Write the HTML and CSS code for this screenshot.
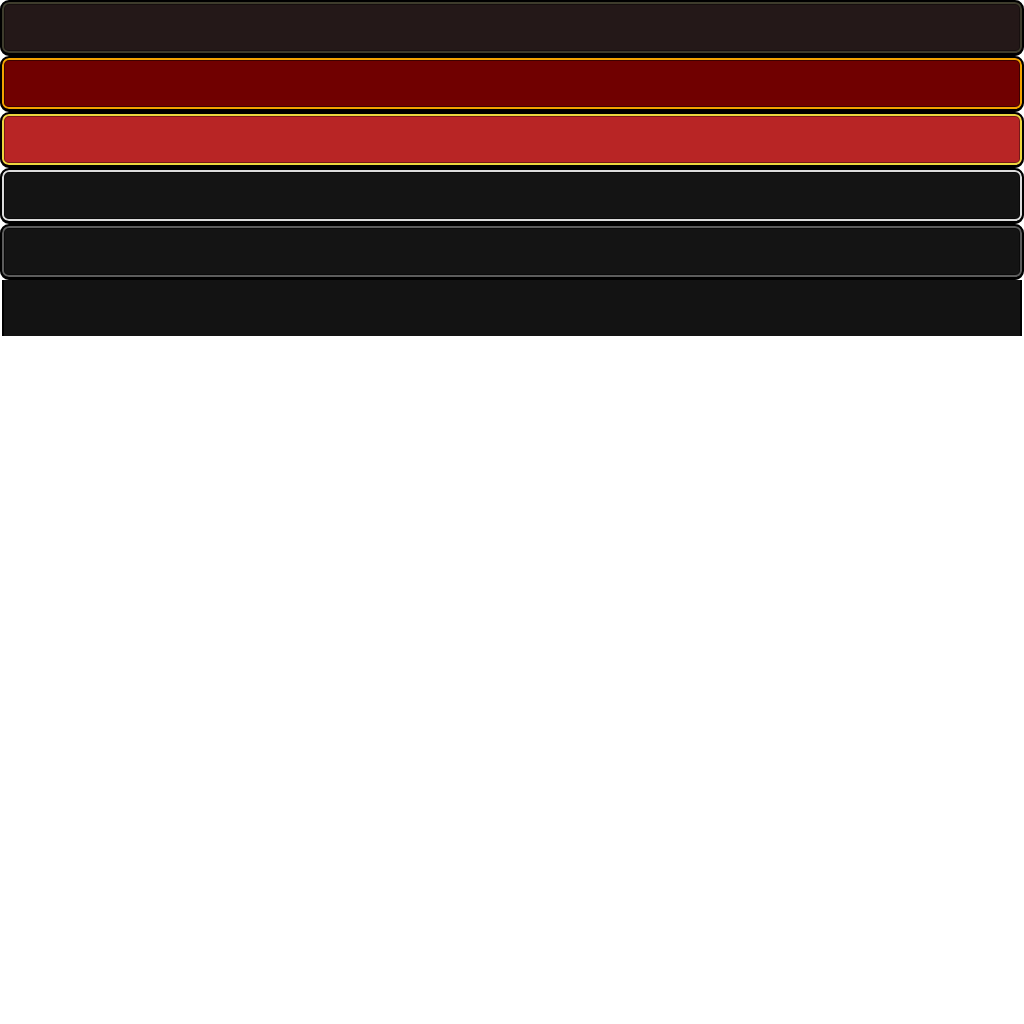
FILE: index.html
```html
<!DOCTYPE html>
<html>
<head>
<meta charset="utf-8">
<link rel="stylesheet" href="styles.css">
</head>
<body>
<div class="stack">
  <div class="bar bar-brown"></div>
  <div class="bar bar-maroon"></div>
  <div class="bar bar-red"></div>
  <div class="bar bar-black-light"></div>
  <div class="bar bar-black-gray"></div>
  <div class="panel"></div>
</div>
</body>
</html>
```

FILE: styles.css
```css
html, body {
  margin: 0;
  padding: 0;
  background: #ffffff;
}

.stack {
  display: flex;
  flex-direction: column;
  width: 1024px;
}

.bar {
  box-sizing: border-box;
  height: 56px;
  border: 2px solid #000;
  border-bottom-width: 3px;
  border-radius: 9px;
}

.bar-brown {
  background: #241818;
  box-shadow: inset 0 0 0 2px #3e3c2c, inset 0 0 0 3px rgba(0,0,0,0.35);
}

.bar-maroon {
  background: #700000;
  box-shadow: inset 0 0 0 2px #f2a200, inset 0 0 0 3px rgba(0,0,0,0.45);
}

.bar-red {
  background: #b82525;
  box-shadow: inset 0 0 0 2px #ecd63e, inset 0 0 0 3px rgba(0,0,0,0.35);
}

.bar-black-light {
  background: #141414;
  box-shadow: inset 0 0 0 2px #dcdcdc, inset 0 0 0 3px rgba(0,0,0,0.5);
}

.bar-black-gray {
  background: #141414;
  box-shadow: inset 0 0 0 2px #5c5c5c, inset 0 0 0 3px rgba(0,0,0,0.5);
}

.panel {
  box-sizing: border-box;
  height: 56px;
  margin: 0 2px;
  border-left: 2px solid #000;
  border-right: 2px solid #000;
  background: #131313;
}
```
